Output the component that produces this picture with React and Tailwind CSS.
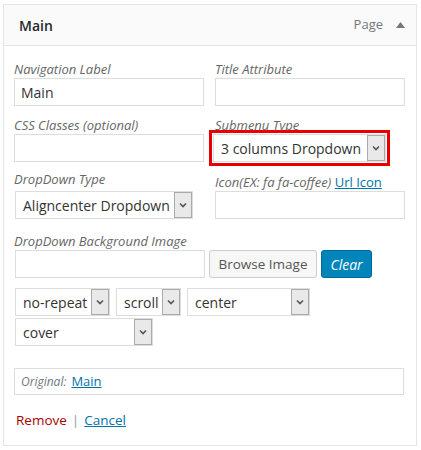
import React from 'react';

const font = { fontFamily: '"Open Sans", "Liberation Sans", sans-serif' };

// Faux select box with the grey arrow button on the right
function SelectBox({ value, className = '' }) {
  return (
    <div className={`relative h-[28px] border border-[#ddd] bg-white flex items-center pl-[7px] text-[14px] text-[#333] ${className}`}>
      <span className="whitespace-nowrap">{value}</span>
      <div className="absolute right-0 top-0 bottom-0 w-[18px] border border-[#aaa] bg-[#e9e9e9] flex items-center justify-center">
        <svg width="8" height="6" viewBox="0 0 8 6">
          <path d="M1 1.5 L4 4.5 L7 1.5" stroke="#555" strokeWidth="1.6" fill="none" />
        </svg>
      </div>
    </div>
  );
}

function TextInput({ value = '', className = '' }) {
  return (
    <div className={`h-[28px] border border-[#ddd] bg-white flex items-center pl-[6px] text-[14px] text-[#333] ${className}`}>
      {value}
    </div>
  );
}

function Label({ children }) {
  return <div className="h-[18px] leading-[18px] text-[13px] italic text-[#666]">{children}</div>;
}

export default function App() {
  return (
    <div className="bg-white w-[421px] h-[450px] pt-[4px] pl-[3px]" style={font}>
      <div className="w-[414px] h-[442px] border border-[#e5e5e5] bg-white">
        {/* header bar */}
        <div className="h-[41px] bg-[#fafafa] border-b border-[#e5e5e5] flex items-center pl-[15px] pr-[11px]">
          <span className="text-[14px] font-semibold text-[#23282d]">Main</span>
          <span className="ml-auto text-[13px] text-[#72777c]">Page</span>
          <svg className="ml-[13px]" width="9" height="6" viewBox="0 0 9 6">
            <path d="M0 6 L4.5 0 L9 6 Z" fill="#72777c" />
          </svg>
        </div>

        <div className="pl-[10px] pt-[14px]">
          {/* row 1 */}
          <div className="flex gap-[11px]">
            <div className="w-[190px]">
              <Label>Navigation Label</Label>
              <TextInput value="Main" />
            </div>
            <div className="w-[190px]">
              <Label>Title Attribute</Label>
              <TextInput />
            </div>
          </div>

          {/* row 2 */}
          <div className="flex gap-[11px] mt-[10px]">
            <div className="w-[190px]">
              <Label>CSS Classes (optional)</Label>
              <TextInput />
            </div>
            <div className="w-[190px]">
              <Label>Submenu Type</Label>
              <div className="relative ml-[-2px] w-[173px]">
                <SelectBox value="3 columns Dropdown" />
                <div className="absolute -left-[4px] -right-[4px] -top-[4px] -bottom-[4px] border-[3px] border-[#e60000]" />
              </div>
            </div>
          </div>

          {/* row 3 */}
          <div className="flex gap-[11px] mt-[8px]">
            <div className="w-[190px]">
              <div className="h-[21px] leading-[18px] text-[13px] italic text-[#666]">DropDown Type</div>
              <SelectBox value="Aligncenter Dropdown" className="w-[178px] ml-[1px] h-[27px]" />
            </div>
            <div className="w-[190px]">
              <div className="h-[21px] pt-[3px] leading-[18px] text-[13px] italic text-[#666]">
                Icon(EX: fa fa-coffee){' '}
                <span className="not-italic text-[#0073aa] underline">Url Icon</span>
              </div>
              <TextInput className="h-[27px]" />
            </div>
          </div>

          {/* background image */}
          <div className="mt-[13px]">
            <Label>DropDown Background Image</Label>
            <div className="flex items-center ml-[1px]">
              <TextInput className="w-[190px]" />
              <button className="ml-[4px] h-[28px] w-[108px] rounded-[3px] border border-[#ccc] bg-[#f7f7f7] text-[13.5px] text-[#555]">
                Browse Image
              </button>
              <button className="ml-[4px] h-[28px] w-[51px] rounded-[3px] border border-[#006799] bg-[#0085ba] text-[14px] italic text-white">
                Clear
              </button>
            </div>
          </div>

          {/* background options */}
          <div className="mt-[10px] ml-[1px] flex gap-[6px]">
            <SelectBox value="no-repeat" className="w-[95px]" />
            <SelectBox value="scroll" className="w-[65px]" />
            <SelectBox value="center" className="w-[123px]" />
          </div>
          <SelectBox value="cover" className="mt-[2px] ml-[1px] w-[138px] h-[27px]" />

          <div className="mt-[22px] w-[390px] h-[27px] border border-[#ddd] flex items-center pl-[6px] text-[12px]">
            <span className="italic text-[#72777c]">Original:</span>
            <span className="ml-[5px] text-[13px] text-[#0073aa] underline">Main</span>
          </div>

          <div className="mt-[15px] pl-[2px] h-[20px] flex items-center text-[13.5px]">
            <span className="text-[#a00]">Remove</span>
            <span className="mx-[5px] text-[#999]">|</span>
            <span className="text-[#0073aa] underline">Cancel</span>
          </div>
        </div>
      </div>
    </div>
  );
}
